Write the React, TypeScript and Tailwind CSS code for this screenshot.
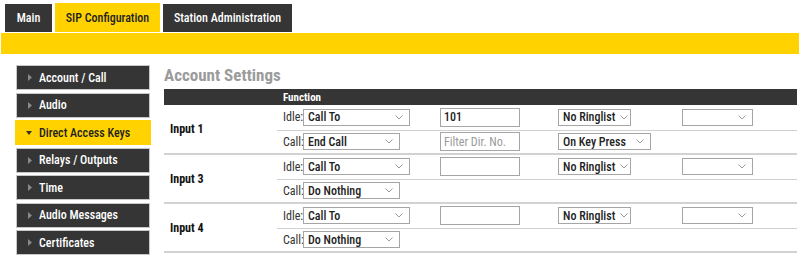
import React from 'react';

const TABS = [
  { name: 'Main', active: false, w: 'w-[47px]' },
  { name: 'SIP Configuration', active: true, w: 'w-[105px]' },
  { name: 'Station Administration', active: false, w: 'w-[129px]' },
];

const MENU = [
  { name: 'Account / Call', active: false },
  { name: 'Audio', active: false },
  { name: 'Direct Access Keys', active: true },
  { name: 'Relays / Outputs', active: false },
  { name: 'Time', active: false },
  { name: 'Audio Messages', active: false },
  { name: 'Certificates', active: false },
];

type Input = {
  label: string;
  idle: string;
  number: string | null;
  call: string;
  keyPress?: string;
};

const INPUTS: Input[] = [
  { label: 'Input 1', idle: 'Call To', number: '101', call: 'End Call', keyPress: 'On Key Press' },
  { label: 'Input 3', idle: 'Call To', number: '', call: 'Do Nothing' },
  { label: 'Input 4', idle: 'Call To', number: '', call: 'Do Nothing' },
];

const Chevron = () => (
  <svg className="w-[8px] h-[5px] shrink-0 ml-[5px]" viewBox="0 0 8 5" fill="none" stroke="#9a9a9a" strokeWidth="1">
    <path d="M0.5 0.5 L4 4 L7.5 0.5" />
  </svg>
);

// fake select so the look stays the same in every browser
const Select = ({ value, width }: { value: string; width: string }) => (
  <div className={`${width} h-[17px] flex items-center justify-between border border-[#a5a5a5] bg-white pl-[4px] pr-[6px] text-[12px] font-medium text-[#222] leading-none`}>
    <span>{value}</span>
    <Chevron />
  </div>
);

const TextBox = ({ value, placeholder }: { value: string; placeholder?: string }) => (
  <div className="w-[80px] h-[19px] flex items-center border border-[#a5a5a5] bg-white px-[3px] text-[12px] leading-none">
    {value ? <span className="font-medium text-[#222]">{value}</span> : <span className="text-[#9a9a9a]">{placeholder}</span>}
  </div>
);

export default function App() {
  return (
    <div className="w-[800px] h-[257px] bg-white overflow-hidden whitespace-nowrap font-['Roboto_Condensed','Liberation_Sans_Narrow','DejaVu_Sans_Condensed',Roboto,sans-serif]">
      {/* Tabs */}
      <div className="flex items-end gap-[3px] pl-[5px] pt-[3px] h-[32px]">
        {TABS.map(tab => (
          <div
            key={tab.name}
            className={`${tab.w} flex items-center justify-center text-[12px] font-medium ${
              tab.active ? 'h-[29px] bg-[#ffd200] text-[#222]' : 'h-[28px] bg-[#353535] text-white'
            }`}
          >
            {tab.name}
          </div>
        ))}
      </div>
      <div className="mt-px mx-px h-[21px] bg-[#ffd200]"></div>

      <div className="flex pt-[11px] pl-[16px]">
        {/* Sidebar */}
        <div className="w-[134px] flex flex-col gap-[2.5px]">
          {MENU.map(item => (
            <div
              key={item.name}
              className={`h-[25px] flex items-center pl-[10px] text-[12px] font-medium border ${
                item.active ? 'bg-[#ffd200] text-[#222] border-[#ffd200] -mx-px' : 'bg-[#353535] text-white border-[#c8c8c8]'
              }`}
            >
              {item.active ? (
                <svg className="w-[6px] h-[4px]" viewBox="0 0 6 4"><path d="M0 0 L6 0 L3 4 Z" fill="#333" /></svg>
              ) : (
                <svg className="w-[4px] h-[7px] ml-[1px]" viewBox="0 0 4 7"><path d="M0 0 L4 3.5 L0 7 Z" fill="#8a8a8a" /></svg>
              )}
              <span className="ml-[7px]">{item.name}</span>
            </div>
          ))}
        </div>

        {/* Content */}
        <div className="ml-[14px] w-[633px]">
          <div className="h-[23px] flex items-center text-[17px] font-bold text-[#9b9b9b] leading-none -mt-[1px]">
            Account Settings
          </div>
          <table className="mt-[2px] w-full table-fixed border-collapse text-[12px]">
            <colgroup>
              <col className="w-[113px]" />
              <col className="w-[153px]" />
              <col className="w-[120px]" />
              <col className="w-[130px]" />
              <col />
            </colgroup>
            <thead>
              <tr className="h-[16px] bg-[#353535] text-white text-[11px] font-bold">
                <th></th>
                <th colSpan={4} className="text-left pl-[6px] font-bold leading-none">Function</th>
              </tr>
            </thead>
            <tbody>
              {INPUTS.map(input => (
                <React.Fragment key={input.label}>
                  <tr className="h-[25px] border-b border-[#cfcfcf]">
                    <td rowSpan={2} className="pl-[6px] font-bold text-[#111] border-b-2 border-[#d2d2d2]">{input.label}</td>
                    <td className="pl-[6px]">
                      <div className="flex items-center">
                        <span className="w-[20px] text-[#333]">Idle:</span>
                        <Select value={input.idle} width="w-[107px]" />
                      </div>
                    </td>
                    <td className="pl-[10px]">
                      <TextBox value={input.number ?? ''} />
                    </td>
                    <td className="pl-[8px]">
                      <Select value="No Ringlist" width="w-[73px]" />
                    </td>
                    <td className="pl-[2px]">
                      <Select value="" width="w-[71px]" />
                    </td>
                  </tr>
                  <tr className="h-[24px] border-b-2 border-[#d2d2d2]">
                    <td className="pl-[6px]">
                      <div className="flex items-center">
                        <span className="w-[20px] text-[#333]">Call:</span>
                        <Select value={input.call} width="w-[97px]" />
                      </div>
                    </td>
                    <td className="pl-[10px]">
                      {input.keyPress && <TextBox value="" placeholder="Filter Dir. No." />}
                    </td>
                    <td className="pl-[8px]">
                      {input.keyPress && <Select value={input.keyPress} width="w-[93px]" />}
                    </td>
                    <td></td>
                  </tr>
                </React.Fragment>
              ))}
            </tbody>
          </table>
        </div>
      </div>
    </div>
  );
}
